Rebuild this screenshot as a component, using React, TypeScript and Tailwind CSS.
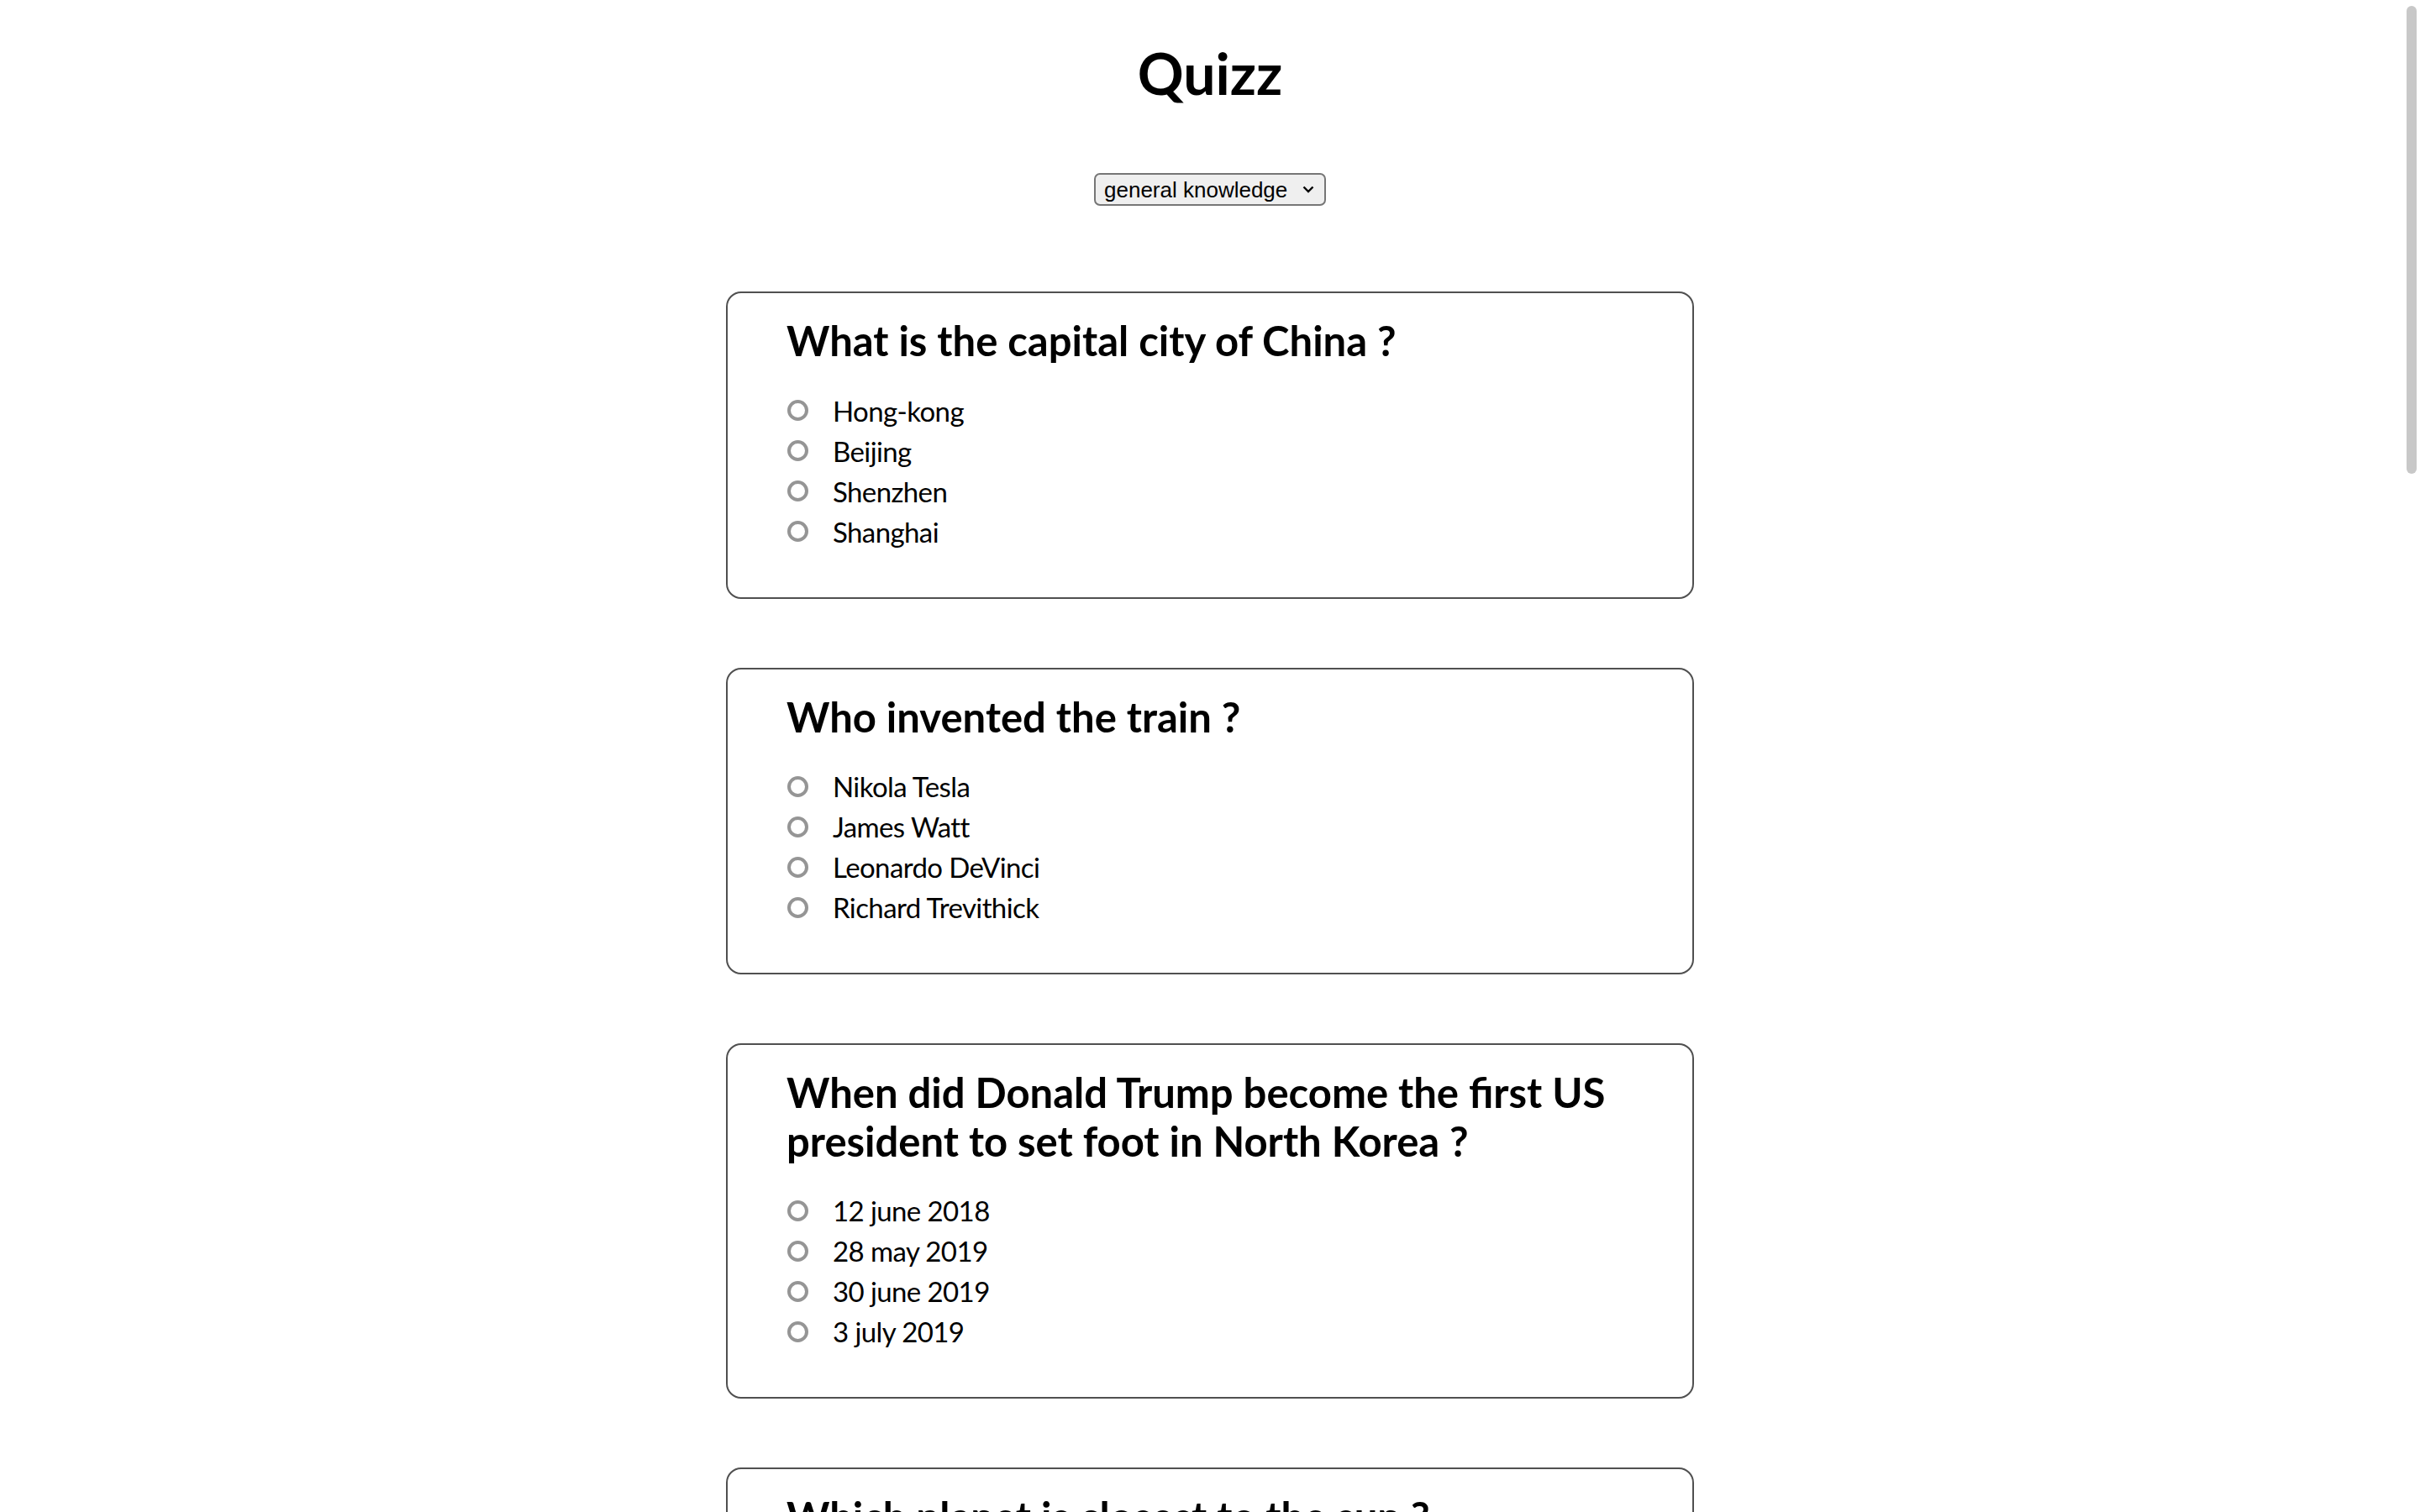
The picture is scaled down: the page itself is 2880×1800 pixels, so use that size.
import { useState } from 'react'

interface Question {
  id: number
  title: string
  answers: string[]
}

const questions: Question[] = [
  {
    id: 1,
    title: 'What is the capital city of China ?',
    answers: ['Hong-kong', 'Beijing', 'Shenzhen', 'Shanghai'],
  },
  {
    id: 2,
    title: 'Who invented the train ?',
    answers: ['Nikola Tesla', 'James Watt', 'Leonardo DeVinci', 'Richard Trevithick'],
  },
  {
    id: 3,
    title: 'When did Donald Trump become the first US president to set foot in North Korea ?',
    answers: ['12 june 2018', '28 may 2019', '30 june 2019', '3 july 2019'],
  },
  {
    id: 4,
    title: 'Which planet is closest to the sun ?',
    answers: ['Mercury', 'Venus', 'Earth', 'Mars'],
  },
]

function QuestionCard({ question }: { question: Question }) {
  const [picked, setPicked] = useState('')

  return (
    <div className="w-[1152px] rounded-[18px] border-2 border-[#505050] px-[70px] pt-[28px] pb-[54px]">
      <h2 className="text-[49px] font-bold leading-[57.6px]">{question.title}</h2>
      <ul className="mt-[30px] flex flex-col">
        {question.answers.map((answer) => (
          <li key={answer} className="h-[48px]">
            <label className="flex h-full cursor-pointer items-center">
              <input
                type="radio"
                name={`q${question.id}`}
                checked={picked === answer}
                onChange={() => setPicked(answer)}
                className="m-0 ml-[1px] mr-[29px] h-[25px] w-[25px] appearance-none rounded-full border-[4px] border-[#959595] checked:border-[8px] checked:border-[#0075ff]"
              />
              <span className="text-[33px] font-normal leading-[48px] tracking-[-0.6px]">{answer}</span>
            </label>
          </li>
        ))}
      </ul>
    </div>
  )
}

export default function App() {
  const [category, setCategory] = useState('general knowledge')

  return (
    <div className="relative h-[1800px] overflow-hidden bg-white font-['Lato',sans-serif] text-black">
      <h1 className="pt-[48px] text-center text-[68px] font-bold leading-[77px]">Quizz</h1>

      <div className="mt-[81px] flex justify-center">
        <div className="relative">
          <select
            value={category}
            onChange={(e) => setCategory(e.target.value)}
            className="h-[39px] w-[276px] appearance-none rounded-[7px] border-2 border-[#767676] bg-[#efefef] pl-[10px] font-['Liberation_Sans',sans-serif] text-[26px] leading-[34px] text-black"
          >
            <option>general knowledge</option>
            <option>history</option>
            <option>geography</option>
          </select>
          <svg
            className="pointer-events-none absolute right-[14px] top-[15px]"
            width="14"
            height="9"
            viewBox="0 0 14 9"
            fill="none"
          >
            <path d="M1.5 1.5 L7 7 L12.5 1.5" stroke="#000" strokeWidth="2.4" />
          </svg>
        </div>
      </div>

      <div className="mt-[102px] flex flex-col items-center gap-[82px]">
        {questions.map((q) => (
          <QuestionCard key={q.id} question={q} />
        ))}
      </div>

      <div className="absolute right-[4px] top-[7px] h-[557px] w-[12px] rounded-full bg-[#c8c8c8]" />
    </div>
  )
}
